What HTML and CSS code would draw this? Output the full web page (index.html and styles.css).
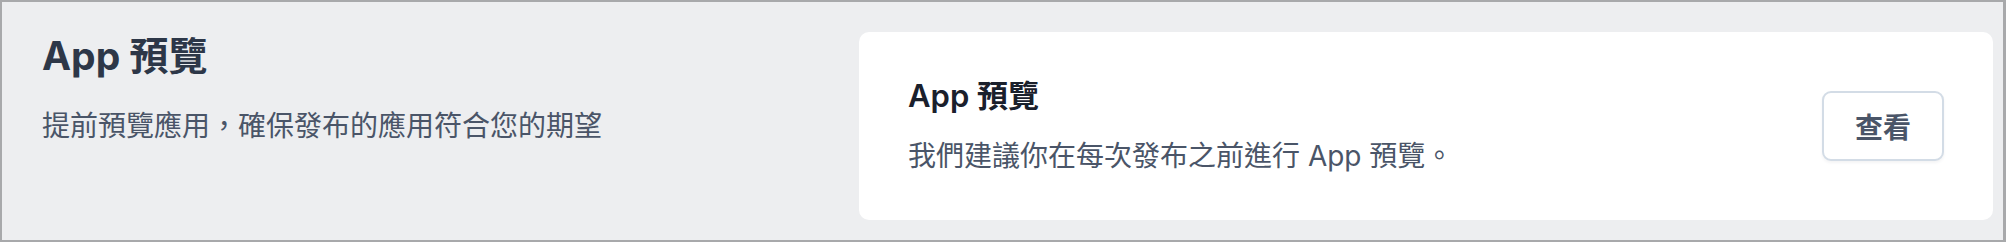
FILE: index.html
```html
<!DOCTYPE html>
<html lang="zh-Hant">
<head>
<meta charset="utf-8">
<title>App 預覽</title>
<link rel="stylesheet" href="styles.css">
</head>
<body>
<div class="frame">
  <div class="intro">
    <h1 class="intro-title">App 預覽</h1>
    <p class="intro-desc">提前預覽應用，確保發布的應用符合您的期望</p>
  </div>
  <div class="card">
    <div class="card-text">
      <h2 class="card-title">App 預覽</h2>
      <p class="card-desc">我們建議你在每次發布之前進行 App 預覽。</p>
    </div>
    <button class="btn" type="button">查看</button>
  </div>
</div>
</body>
</html>
```

FILE: styles.css
```css
* {
  box-sizing: border-box;
}

html, body {
  margin: 0;
  padding: 0;
}

body {
  font-family: "Inter", "Noto Sans CJK TC", sans-serif;
  background: #edeef0;
}

.frame {
  width: 2006px;
  height: 242px;
  border: 2px solid #a8a9ab;
  border-right-width: 3px;
  background: #edeef0;
  display: flex;
  justify-content: space-between;
  align-items: flex-start;
}

.intro {
  padding: 30px 0 0 40px;
}

.intro-title {
  margin: 0;
  font-size: 39px;
  line-height: 48px;
  font-weight: 700;
  color: #2d3748;
}

.intro-desc {
  margin: 26px 0 0;
  font-size: 28px;
  line-height: 40px;
  font-weight: 400;
  color: #4a5568;
}

.card {
  width: 1134px;
  height: 188px;
  margin: 30px 10px 0 0;
  padding: 0 49px;
  background: #ffffff;
  border-radius: 10px;
  display: flex;
  align-items: center;
  justify-content: space-between;
}

.card-text {
  display: flex;
  flex-direction: column;
  gap: 20px;
}

.card-title {
  margin: 0;
  font-size: 31px;
  line-height: 40px;
  font-weight: 600;
  color: #1a202c;
}

.card-desc {
  margin: 0;
  font-size: 28px;
  line-height: 40px;
  font-weight: 400;
  color: #4a5568;
}

.btn {
  width: 122px;
  height: 70px;
  border: 2px solid #d3dce6;
  border-radius: 9px;
  background: #ffffff;
  box-shadow: 0 2px 3px rgba(30, 40, 60, 0.05);
  font-family: "Inter", "Noto Sans CJK TC", sans-serif;
  font-size: 28px;
  font-weight: 600;
  color: #4a5568;
  padding: 0;
  cursor: pointer;
}
```
